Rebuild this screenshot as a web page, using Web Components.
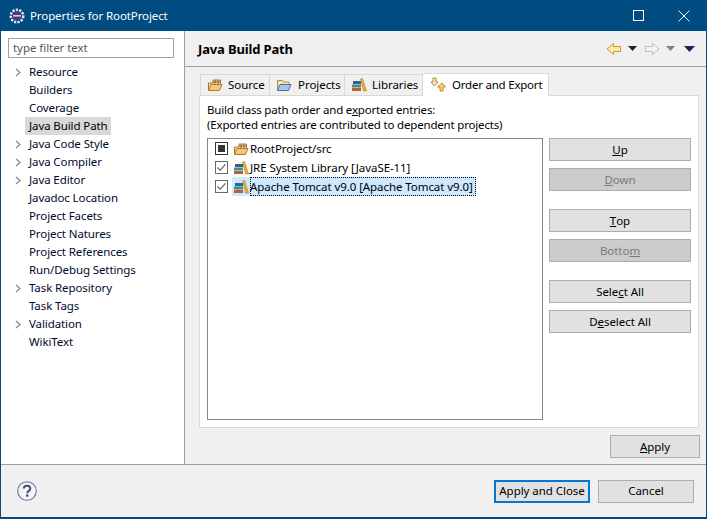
<!DOCTYPE html>
<html><head><meta charset="utf-8"><style>
html,body{margin:0;padding:0;background:#f0f0f0}
body{width:707px;height:519px;overflow:hidden;font:11.5px/16px "Noto Sans",sans-serif;letter-spacing:-.05px;color:#000}
</style></head><body>
<prop-dialog></prop-dialog>
<script>
const ICONS={
pkg:`<svg width="16" height="16" viewBox="0 0 16 16"><path d="M1.500 13.500 V6 H6 V3 H13.500 V7" fill="#f3e2b4" stroke="#a8763a"/><path d="M8 3v4M11 3v4M6 5h7.500" stroke="#8d6233" fill="none"/><path d="M1.500 13.500 L4 7.500 H15 L12.500 13.500Z" fill="#f6c777" stroke="#b07c35"/></svg>`,
prj:`<svg width="16" height="16" viewBox="0 0 16 16"><path d="M1.500 13 V3.500 H6.500 L8 5 H13 V8" fill="#f5e3b0" stroke="#b38d45"/><path d="M1.500 13.500 L4 7.500 H15 L12.500 13.500Z" fill="#a9c5e8" stroke="#4d6f9f"/></svg>`,
lib:`<svg width="16" height="16" viewBox="0 0 16 16"><rect x="1" y="11" width="9" height="3" fill="#b85f3a"/><rect x="1" y="7.500" width="9" height="3" fill="#3f8f7a"/><rect x="2" y="4" width="8" height="3" fill="#2f5f9a"/><path d="M9.500 2 L11.500 1.500 L15.500 14 H12.500Z" fill="#eeb032" stroke="#b97d1a" stroke-width=".6"/></svg>`,
ord:`<svg width="16" height="16" viewBox="0 0 16 16"><path d="M3 1h3v4h2l-3.500 4L1 5h2z" fill="#fbe9b8" stroke="#b58a3a"/><path d="M12 6l3.500 4H13v4h-3v-4H7.500z" fill="#f8d37e" stroke="#c08a28"/></svg>`
};
class Base extends HTMLElement{
  render(css,html){const s=this.attachShadow({mode:'open'});s.innerHTML=`<style>${css}</style>${html}`;}
}
class TitleBar extends Base{connectedCallback(){this.render(`
:host{display:flex;align-items:center;height:31px;background:#004b7f;color:#fff;padding-left:8px;flex:none;letter-spacing:-.1px}
.t{margin-left:5px;flex:1}
.b{width:46px;height:31px;display:flex;align-items:center;justify-content:center}
`,`<svg width="16" height="16" viewBox="0 0 16 16"><circle cx="8" cy="8" r="6.200" fill="none" stroke="#e8e4ee" stroke-width="2.600" stroke-dasharray="2.200 1.200"/><circle cx="8" cy="8" r="4.600" fill="#4a3a78"/><path d="M4 7h8v1.600H4z" fill="#cfc8de"/></svg>
<span class="t">Properties for RootProject</span>
<span class="b" style="margin-right:1px"><svg width="11" height="11"><rect x=".5" y=".5" width="10" height="10" fill="none" stroke="#fff"/></svg></span>
<span class="b" style="width:44px"><svg width="12" height="12"><path d="M.5.5l11 11M11.500.5l-11 11" stroke="#fff" fill="none"/></svg></span>`);}}
class TreeItem extends Base{connectedCallback(){const sel=this.hasAttribute('selected'),ex=this.hasAttribute('expand');this.render(`
:host{display:flex;height:18px;align-items:center;line-height:18px;white-space:nowrap;letter-spacing:-.1px}
.a{width:14px;margin-left:12px;padding-left:2px;height:18px;display:flex;align-items:center;flex:none}
.l{padding:0 3px 0 4px;margin-left:-4px;color:#000a2a}
.s{background:#d9d9d9;color:#000}
`,`<span class="a">${ex?'<svg width="7" height="9"><path d="M1 1l4 3.500-4 3.500" fill="none" stroke="#8a8a8a" stroke-width="1.300"/></svg>':''}</span><span class="l ${sel?'s':''}"><slot></slot></span>`);}}
class SideBar extends Base{connectedCallback(){this.render(`
:host{display:block;width:183px;flex:none;background:#fff;border-right:1px solid #a0a0a0}
.f{margin:7px 10px 0 7px;height:20px;box-sizing:border-box;border:1px solid #a0a0a0;padding:0 4px;line-height:18px;color:#555;overflow:hidden}
.t{margin-top:5px}
`,`<div class="f">type filter text</div><div class="t"><slot></slot></div>`);}}
class TabBar extends Base{connectedCallback(){this.render(`
:host{display:flex;height:23px;margin-left:15px;align-items:flex-end;flex:none;position:relative;z-index:1}
`,`<slot></slot>`);}}
class TabItem extends Base{connectedCallback(){const a=this.hasAttribute('active'),w=this.getAttribute('w'),g=this.getAttribute('g')||5;this.render(`
:host{display:flex;align-items:center;box-sizing:border-box;width:${w}px;height:${a?23:21}px;padding:0 0 0 ${a?7:6}px;gap:${g}px;white-space:nowrap;letter-spacing:${a?'-.22px':'-.05px'};
background:${a?'#fff':'#f0f0f0'};border:1px solid #d9d9d9;border-bottom:${a?'1px solid #fff':'0'};margin-right:-1px;${a?'margin-bottom:-1px;':''}}
svg{flex:none}
`,`${ICONS[this.getAttribute('icon')]}<slot></slot>`);}}
class PushBtn extends Base{connectedCallback(){const d=this.hasAttribute('disabled'),f=this.hasAttribute('focused');this.render(`
:host{display:flex;align-items:center;justify-content:center;box-sizing:border-box;height:23px;white-space:nowrap;flex:none;
border:${f?'2px solid #0078d7':'1px solid #adadad'};background:${d?'#cccccc':'#e1e1e1'};color:${d?'#7a7a7a':'#000'};line-height:16px}
`,`<slot></slot>`);}}
class ListRow extends Base{connectedCallback(){const c=this.getAttribute('check'),s=this.hasAttribute('selected');
const box=c==='mixed'?'<rect x="3" y="3" width="7" height="7" fill="#333"/>':'<path d="M2.500 6.500l2.800 2.800 5-6" fill="none" stroke="#555" stroke-width="1.100"/>';
this.render(`
:host{display:flex;align-items:center;height:19px;padding-left:7px;white-space:nowrap;letter-spacing:-.07px}
.c{flex:none;width:13px;height:13px;margin-right:4px}
.i{flex:none;display:flex;height:19px;width:18px;align-items:center;box-sizing:border-box;padding-left:1px;${s?'background:#cde8ff;':''}}
.l{height:19px;line-height:19px;box-sizing:border-box;padding:0 3px 0 0;${s?'background:#cde8ff;outline:1px dotted #000;outline-offset:-1px;':''}}
`,`<svg class="c" viewBox="0 0 13 13"><rect x=".5" y=".5" width="12" height="12" fill="#fff" stroke="${c==='mixed'?'#333':'#666'}"/>${box}</svg><span class="i">${ICONS[this.getAttribute('icon')]}</span><span class="l"><slot></slot></span>`);}}
class OrderPage extends Base{connectedCallback(){this.render(`
:host{display:flex;flex-direction:column;background:#fff;border:1px solid #d9d9d9;margin:0 7px 0 14px;height:333px;box-sizing:border-box;padding:6px 7px 0 7px}
.d{height:36px;line-height:15px;white-space:nowrap;letter-spacing:-.18px}
.r{display:flex;gap:6px;height:282px}
.list{width:336px;height:282px;box-sizing:border-box;border:1px solid #828790;flex:none}
.btns{width:142px;display:flex;flex-direction:column;flex:none}
`,`<div class="d"><slot name="desc"></slot></div><div class="r"><div class="list"><slot name="row"></slot></div><div class="btns"><slot name="btn"></slot></div></div>`);}}
class RightPane extends Base{connectedCallback(){this.render(`
:host{display:flex;flex-direction:column;flex:1;background:#f0f0f0;min-width:0}
.h{height:35px;flex:none;display:flex;align-items:center;padding-left:13px;font-weight:700;font-size:13px;letter-spacing:-.15px;border-bottom:1px solid #a0a0a0}
.ttl{padding-top:1px}
.n{margin-left:auto;display:flex;align-items:center;margin-right:11px}
.s{height:5px}
.a{display:flex;justify-content:flex-end;padding:7px 6px 0 0}
`,`<div class="h"><span class="ttl">Java Build Path</span><span class="n">
<svg width="16" height="14" viewBox="0 0 16 14"><path d="M7.500 1.500L1 7l6.500 5.500V9.500H14.500V4.500H7.500z" fill="#fde9a8" stroke="#cf9a35"/></svg>
<svg width="9" height="5" style="margin-left:6px"><path d="M0 0h9L4.500 5z" fill="#222"/></svg>
<svg width="16" height="14" viewBox="0 0 16 14" style="margin-left:7px"><path d="M8.500 1.500L15 7l-6.500 5.500V9.500H1.500V4.500H8.500z" fill="#f4f4f4" stroke="#bdbdbd"/></svg>
<svg width="9" height="5" style="margin-left:6px"><path d="M0 0h9L4.500 5z" fill="#7d7d7d"/></svg>
<svg width="11" height="6" style="margin-left:9px"><path d="M0 0h11L5.500 6z" fill="#33195a"/></svg>
</span></div><div class="s"></div><slot name="tabs"></slot><slot name="page"></slot><div class="a"><slot name="apply"></slot></div>`);}}
class FootBar extends Base{connectedCallback(){this.render(`
:host{display:flex;align-items:center;height:53px;flex:none;border-top:1px solid #a0a0a0;background:#f0f0f0;padding:0 12px 0 16px;gap:8px;box-sizing:border-box}
.sp{flex:1}
`,`<svg width="20" height="20" viewBox="0 0 20 20"><circle cx="10" cy="10" r="9.300" fill="#f4f4f4" stroke="#5f7a9c" stroke-width="1.100"/><path d="M6.800 7.600C6.800 5.600 8.300 4.700 10 4.700c1.800 0 3.300 1 3.300 2.800 0 2.400-3 2.400-3 4.700" fill="none" stroke="#3d5273" stroke-width="2"/><rect x="9.100" y="13.400" width="2.300" height="2.300" fill="#3d5273"/></svg><span class="sp"></span><slot></slot>`);}}
class PropDialog extends Base{connectedCallback(){
const tree=[['Resource',1],['Builders'],['Coverage'],['Java Build Path',0,1],['Java Code Style',1],['Java Compiler',1],['Java Editor',1],['Javadoc Location'],['Project Facets'],['Project Natures'],['Project References'],['Run/Debug Settings'],['Task Repository',1],['Task Tags'],['Validation',1],['WikiText']];
this.render(`
:host{display:flex;flex-direction:column;width:707px;height:519px;box-sizing:border-box;border:solid #004b7f;border-width:0 1px 2px 1px;background:#f0f0f0}
.m{display:flex;flex:1;min-height:0}
push-btn[slot=btn]{margin-bottom:7px}
.mb{margin-bottom:18px !important}
`,`<title-bar></title-bar><div class="m"><side-bar>
${tree.map(t=>`<tree-item ${t[1]?'expand':''} ${t[2]?'selected':''}>${t[0]}</tree-item>`).join('')}
</side-bar><right-pane>
<tab-bar slot="tabs"><tab-item icon="pkg" w="70">Source</tab-item><tab-item icon="prj" w="76" g="6">Projects</tab-item><tab-item icon="lib" w="79">Libraries</tab-item><tab-item icon="ord" w="127" g="6" active>Order and Export</tab-item></tab-bar>
<order-page slot="page">
<span slot="desc">Build class path order and e<u>x</u>ported entries:<br>(Exported entries are contributed to dependent projects)</span>
<list-row slot="row" check="mixed" icon="pkg">RootProject/src</list-row>
<list-row slot="row" check="on" icon="lib">JRE System Library [JavaSE-11]</list-row>
<list-row slot="row" check="on" icon="lib" selected>Apache Tomcat v9.0 [Apache Tomcat v9.0]</list-row>
<push-btn slot="btn"><u>U</u>p</push-btn>
<push-btn slot="btn" disabled class="mb"><u>D</u>own</push-btn>
<push-btn slot="btn"><u>T</u>op</push-btn>
<push-btn slot="btn" disabled class="mb">Botto<u>m</u></push-btn>
<push-btn slot="btn">Sele<u>c</u>t All</push-btn>
<push-btn slot="btn">D<u>e</u>select All</push-btn>
</order-page>
<push-btn slot="apply" style="width:90px"><u>A</u>pply</push-btn>
</right-pane></div>
<foot-bar><push-btn focused style="width:96px">Apply and Close</push-btn><push-btn style="width:96px">Cancel</push-btn></foot-bar>`);}}
const defs={'title-bar':TitleBar,'tree-item':TreeItem,'side-bar':SideBar,'tab-bar':TabBar,'tab-item':TabItem,'push-btn':PushBtn,'list-row':ListRow,'order-page':OrderPage,'right-pane':RightPane,'foot-bar':FootBar,'prop-dialog':PropDialog};
for(const k in defs)customElements.define(k,defs[k]);
</script>
</body></html>
